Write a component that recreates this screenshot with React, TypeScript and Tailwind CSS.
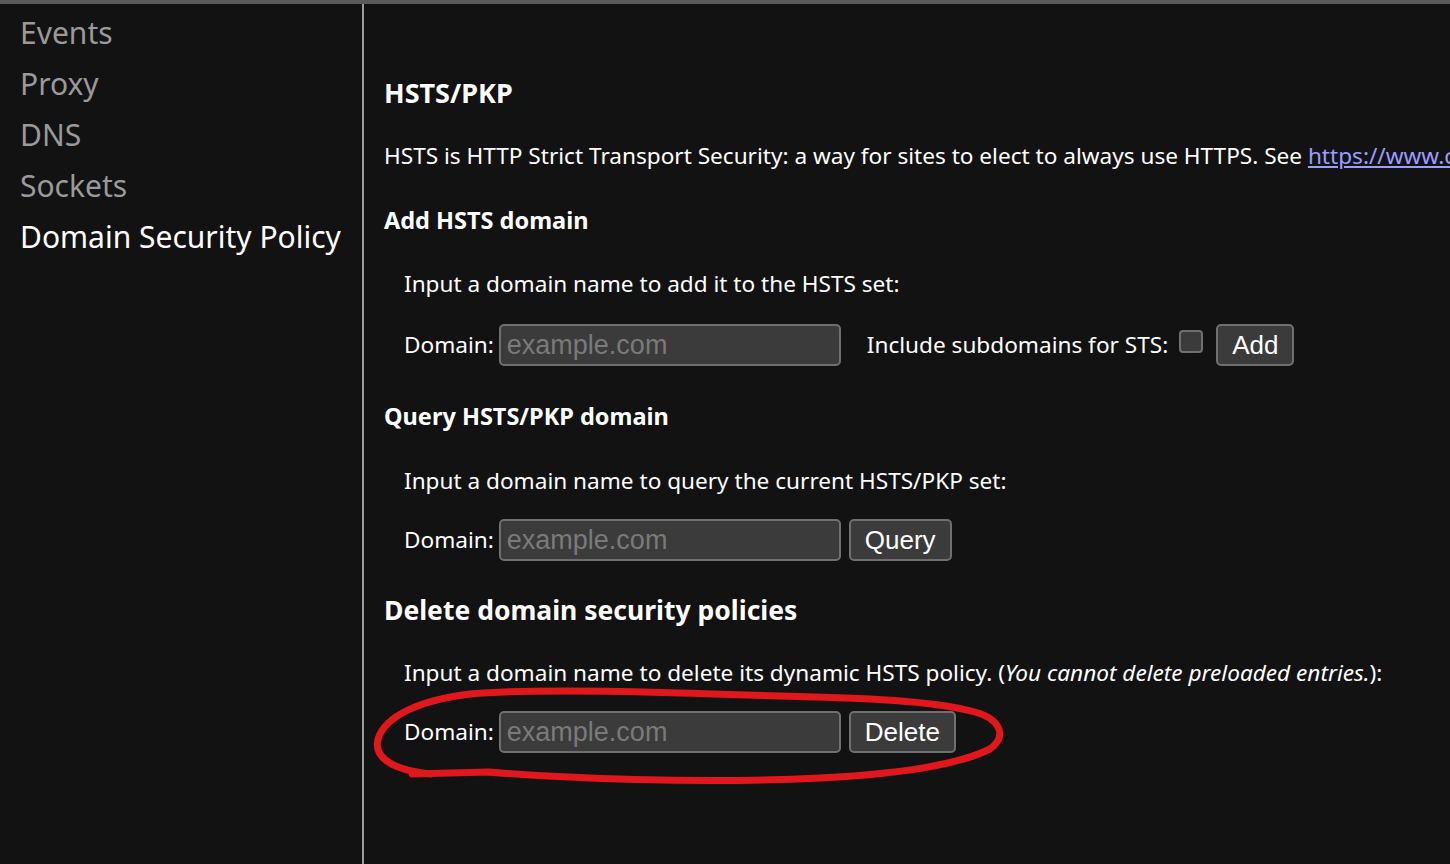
import React from 'react';

const navItems = ['Events', 'Proxy', 'DNS', 'Sockets', 'Domain Security Policy'];

const DomainInput: React.FC = () => (
  <input
    type="text"
    placeholder="example.com"
    className="h-[42px] w-[342px] rounded-[5px] border-2 border-[#6f6f6f] bg-[#3b3b3b] px-[6px] text-[27px] text-white outline-none placeholder:text-[#7a7a7a] [font-family:'Liberation_Sans',Arial,sans-serif]"
  />
);

const Btn: React.FC<{ label: string; className?: string }> = ({ label, className }) => (
  <button
    className={`h-[42px] rounded-[5px] border-2 border-[#6f6f6f] bg-[#3b3b3b] px-[14px] text-[26px] leading-none text-white [font-family:'Liberation_Sans',Arial,sans-serif] ${className ?? ''}`}
  >
    {label}
  </button>
);

export default function App() {
  return (
    <div className="relative flex h-[864px] w-[1450px] overflow-hidden border-t-4 border-[#5a5a5a] bg-[#121212] text-white [font-family:'Noto_Sans',sans-serif]">
      <nav className="w-[364px] shrink-0 border-r-2 border-[#9b9b9b] pl-[20px] pt-[3px]">
        {navItems.map((item, i) => (
          <div
            key={item}
            className={`text-[30px] leading-[51px] ${i === navItems.length - 1 ? 'text-white' : 'text-[#9a9a9a]'}`}
          >
            {item}
          </div>
        ))}
      </nav>

      <main className="min-w-0 flex-1 pl-[20px] pt-[71px] whitespace-nowrap">
        <h2 className="text-[27px] font-bold leading-[36px]">HSTS/PKP</h2>
        <p className="mt-[29px] text-[22.6px] leading-[32px]">
          HSTS is HTTP Strict Transport Security: a way for sites to elect to always use HTTPS. See{' '}
          <a href="#" className="text-[#9d9dff] underline">https://www.chromium.org/hsts</a>
        </p>

        <h3 className="mt-[32px] text-[23.5px] font-bold leading-[32px]">Add HSTS domain</h3>
        <div className="pl-[20px]">
          <p className="mt-[32px] text-[22.6px] leading-[32px]">Input a domain name to add it to the HSTS set:</p>
          <div className="mt-[24px] flex items-center text-[22.6px]">
            <span className="mr-[5px]">Domain:</span>
            <DomainInput />
            <span className="ml-[26px] mr-[11px]">Include subdomains for STS:</span>
            <span className="mb-[8px] h-[23px] w-[24px] rounded-[4px] border-2 border-[#6f6f6f] bg-[#3b3b3b]" />
            <Btn label="Add" className="ml-[13px]" />
          </div>
        </div>

        <h3 className="mt-[34px] text-[23.5px] font-bold leading-[32px]">Query HSTS/PKP domain</h3>
        <div className="pl-[20px]">
          <p className="mt-[33px] text-[22.6px] leading-[32px]">Input a domain name to query the current HSTS/PKP set:</p>
          <div className="mt-[22px] flex items-center text-[22.6px]">
            <span className="mr-[5px]">Domain:</span>
            <DomainInput />
            <Btn label="Query" className="ml-[8px]" />
          </div>
        </div>

        <h2 className="mt-[31px] text-[26.5px] font-bold leading-[36px]">Delete domain security policies</h2>
        <div className="pl-[20px]">
          <p className="mt-[29px] text-[22.6px] leading-[32px]">
            Input a domain name to delete its dynamic HSTS policy. (<em>You cannot delete preloaded entries.</em>):
          </p>
          <div className="mt-[22px] flex items-center text-[22.6px]">
            <span className="mr-[5px]">Domain:</span>
            <DomainInput />
            <Btn label="Delete" className="ml-[8px]" />
          </div>
        </div>
      </main>

      <svg
        className="pointer-events-none absolute left-0 top-0"
        width="1450"
        height="864"
        viewBox="0 0 1450 864"
        fill="none"
      >
        <path
          d="M412 770 L488 768 C560 774 700 780 820 774 C900 770 960 760 990 745 C1008 732 1000 715 975 708 C930 696 860 694 780 692 C660 688 540 684 470 690 C420 696 385 712 378 735 C373 755 395 766 430 770"
          stroke="#e0171b"
          strokeWidth="7"
          strokeLinecap="round"
          strokeLinejoin="round"
        />
      </svg>
    </div>
  );
}
